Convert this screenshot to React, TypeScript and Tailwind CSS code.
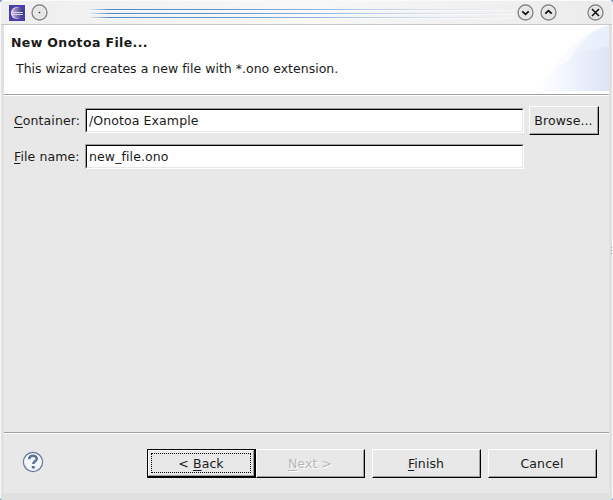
import type { ReactNode } from "react";

function TitleButton({ children, className = "" }: { children: ReactNode; className?: string }) {
  return (
    <svg width="17" height="17" viewBox="0 0 17 17" className={`shrink-0 ${className}`}>
      <circle cx="8.5" cy="8.5" r="7.4" fill="#e5e5e5" stroke="#858585" strokeWidth="1.5" />
      <circle cx="8.5" cy="8.5" r="6.2" fill="none" stroke="#f4f4f4" strokeWidth="0.7" />
      {children}
    </svg>
  );
}

function EclipseIcon() {
  return (
    <svg width="16" height="16" viewBox="0 0 16 16" className="shrink-0">
      <defs>
        <linearGradient id="moon" x1="0" x2="1">
          <stop offset="0" stopColor="#c9abd0" />
          <stop offset="0.45" stopColor="#7b6db2" />
          <stop offset="1" stopColor="#2f2872" />
        </linearGradient>
      </defs>
      <path d="M0 0h16v16H0z" fill="#4840a8" />
      <circle cx="7.8" cy="8" r="6" fill="#e3cbdc" />
      <circle cx="9" cy="8" r="5.6" fill="url(#moon)" />
      <path d="M2 7.5h12M2 9.5h12" stroke="#d0dcf2" />
    </svg>
  );
}

function Separator() {
  return <div className="h-[2px] shrink-0 border-b border-white bg-[#a0a0a0]" />;
}

function Button({ children, className = "w-[109px]", disabled = false }: { children: ReactNode; className?: string; disabled?: boolean }) {
  return (
    <button
      disabled={disabled}
      className={`h-[29px] shrink-0 border border-t-white border-r-black border-b-black border-l-white bg-[#e8e8e8] ${className}`}
    >
      <span className={`flex h-full items-center justify-center border-r border-b border-[#a0a0a0] ${disabled ? "text-[#b8b8b8] [text-shadow:1px_1px_0_white]" : ""}`}>
        <span>{children}</span>
      </span>
    </button>
  );
}

function Key({ children }: { children: ReactNode }) {
  return <span className="underline decoration-1 underline-offset-2">{children}</span>;
}

function Field({ label, value }: { label: ReactNode; value: string }) {
  return (
    <>
      <label className="w-[71px] shrink-0 whitespace-nowrap">{label}</label>
      <div className="h-[25px] w-[439px] shrink-0 border border-t-[#a0a0a0] border-r-white border-b-white border-l-[#a0a0a0]">
        <div className="flex h-full items-center border border-t-black border-r-[#e8e8e8] border-b-[#e8e8e8] border-l-black bg-white pl-[2px]">
          {value}
        </div>
      </div>
    </>
  );
}

export default function App() {
  return (
    <div className="h-[500px] w-[613px] overflow-hidden bg-[#5c8cc4]">
      <div className="relative flex h-full flex-col overflow-hidden rounded-t-[4px] rounded-b-[3px] border-x border-[#f8f8f8] bg-[#e0e0e0] font-['DejaVu_Sans',sans-serif] text-[12.5px] leading-[15px] tracking-[0.1px] text-[#1a1a1a]">
        <header className="flex h-[25px] shrink-0 items-center border-t border-b border-t-[#fafafa] border-b-[#c8c8c8] bg-linear-to-r from-[#eeeeee] via-[#f8f8f8] to-[#ebebeb] pl-2">
          <EclipseIcon />
          <TitleButton className="ml-[6px]">
            <circle cx="8.5" cy="8.5" r="0.8" fill="#222" />
          </TitleButton>
          <svg width="426" height="13" viewBox="0 0 426 13" className="mt-[2px] ml-[40px] shrink-0">
            <defs>
              <linearGradient id="stripe" gradientUnits="userSpaceOnUse" x1="0" x2="426" y1="0" y2="0">
                <stop offset="0" stopColor="#4f8ac6" stopOpacity="0" />
                <stop offset="0.05" stopColor="#4f8ac6" />
                <stop offset="0.3" stopColor="#5b93cd" />
                <stop offset="0.55" stopColor="#8fb5e2" />
                <stop offset="1" stopColor="#c5daf2" stopOpacity="0" />
              </linearGradient>
            </defs>
            <path d="M0 2h426v1H0zM0 6h426v1H0zM0 10h426v1H0z" fill="url(#stripe)" />
            <path d="M0 3h426v1H0zM0 7h426v1H0zM0 11h426v1H0z" fill="#fff" opacity="0.5" />
          </svg>
          <TitleButton className="ml-[3px]">
            <path d="M5.3 7.3l3.2 3 3.2-3" fill="none" stroke="#111" strokeWidth="1.8" />
          </TitleButton>
          <TitleButton className="ml-[6px]">
            <path d="M5.3 9.7l3.2-3 3.2 3" fill="none" stroke="#111" strokeWidth="1.8" />
          </TitleButton>
          <TitleButton className="ml-[30px]">
            <path d="M5 5l7 7M12 5l-7 7" stroke="#111" strokeWidth="1.6" />
          </TitleButton>
        </header>

        <main className="ml-[3px] flex h-[468px] w-[605px] shrink-0 flex-col bg-[#e8e8e8]">
          <section className="flex h-[69px] shrink-0 justify-between bg-white">
            <div className="pt-[10px] pl-[7px]">
              <h1 className="font-bold tracking-[0.38px]">New Onotoa File...</h1>
              <p className="mt-[11px] ml-[5px] whitespace-nowrap tracking-[0.01px]">This wizard creates a new file with *.ono extension.</p>
            </div>
            <svg width="75" height="66" viewBox="0 0 75 66" className="shrink-0">
              <defs>
                <linearGradient id="outer" x1="0" x2="1">
                  <stop offset="0" stopColor="#fff" />
                  <stop offset="0.5" stopColor="#f8fafe" />
                  <stop offset="1" stopColor="#eaf0fb" />
                </linearGradient>
                <linearGradient id="inner" x1="0" x2="1">
                  <stop offset="0" stopColor="#fff" />
                  <stop offset="0.4" stopColor="#f2f6fd" />
                  <stop offset="1" stopColor="#dce4f6" />
                </linearGradient>
              </defs>
              <path d="M4 66C20 34 45 8 75 0v66z" fill="url(#outer)" />
              <path d="M33 37C43 21 57 6 75 0v22C60 24 45 29 33 37z" fill="#e5ecf9" opacity="0.55" />
              <path d="M2 66C20 42 43 24 75 22v44z" fill="url(#inner)" />
            </svg>
          </section>
          <Separator />
          <div className="mt-[10px] flex h-[29px] shrink-0 items-center pl-[10px]">
            <Field label={<><Key>C</Key>ontainer:</>} value="/Onotoa Example" />
            <Button className="ml-[5px] w-[70px]">Browse...</Button>
          </div>
          <div className="mt-[9px] flex h-[25px] shrink-0 items-center pl-[10px]">
            <Field label={<><Key>F</Key>ile name:</>} value="new_file.ono" />
          </div>
          <div className="grow" />
          <Separator />
          <footer className="flex h-[59px] shrink-0 items-start pt-[15px] pl-[18px]">
            <svg width="22" height="22" viewBox="0 0 22 22" className="mt-[2px] mr-[103px] shrink-0">
              <circle cx="11" cy="11" r="9.6" fill="#f5f6f9" stroke="#61779d" strokeWidth="1.2" />
              <path d="M7.2 8.2c0-4.6 7.6-4.4 7.6-.4 0 2.6-3.5 2.5-3.5 5.3" fill="none" stroke="#5b7299" strokeWidth="2.5" />
              <path d="M9.8 15h3v2.6h-3z" fill="#5b7299" />
            </svg>
            <button className="h-[29px] w-[109px] shrink-0 border border-r-2 border-b-2 border-black">
              <span className="flex h-full border border-t-white border-r-[#a0a0a0] border-b-[#a0a0a0] border-l-white p-[2px]">
                <span className="flex grow items-center justify-center border border-dotted border-black">
                  <span>&lt; <Key>B</Key>ack</span>
                </span>
              </span>
            </button>
            <Button disabled><Key>N</Key>ext &gt;</Button>
            <Button className="ml-[7px] w-[109px]"><Key>F</Key>inish</Button>
            <Button className="ml-[7px] w-[109px]">Cancel</Button>
          </footer>
        </main>
        <svg width="3" height="8" className="absolute top-[247px] -right-px">
          <path d="M1 0h1v1H1zM1 3h1v1H1zM1 6h1v1H1z" fill="#999" />
        </svg>
      </div>
    </div>
  );
}
